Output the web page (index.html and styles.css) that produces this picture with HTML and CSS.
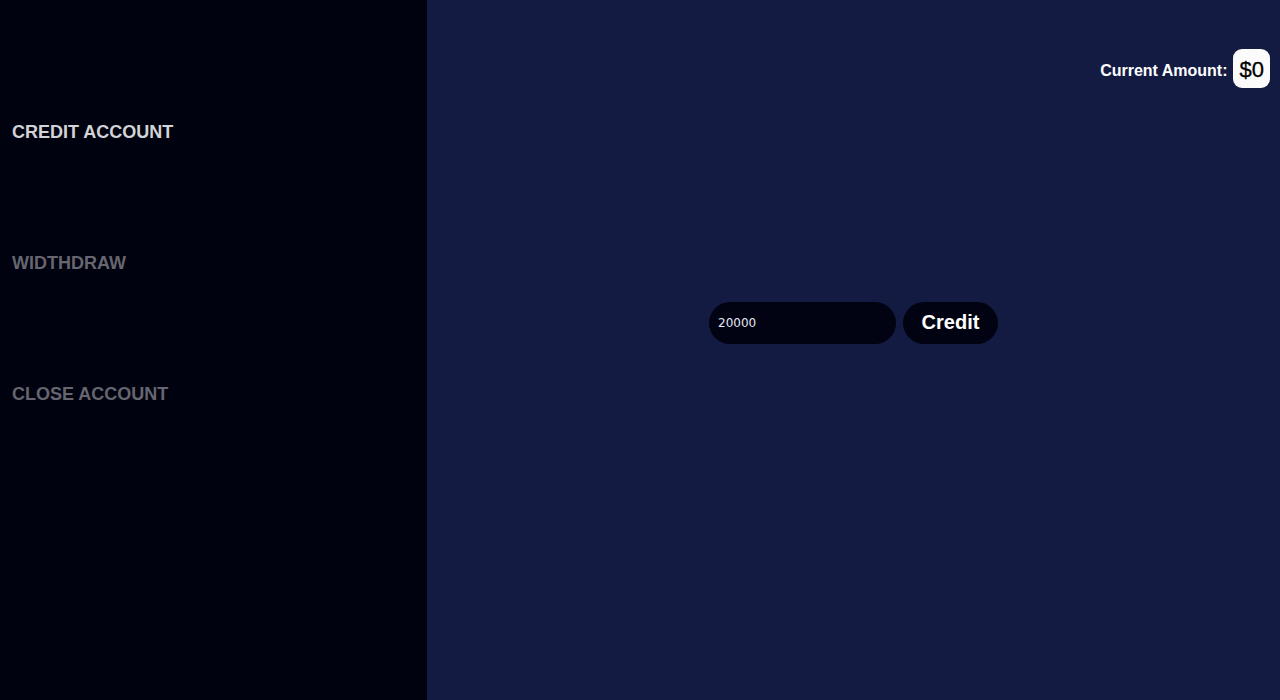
FILE: index.html
```html
<!DOCTYPE html>
<html>
<head>
<meta charset="utf-8">
<link rel="stylesheet" href="styles.css">
</head>
<body>
<div class="app">
  <aside class="sidebar">
    <nav class="nav">
      <a class="nav-item active">CREDIT ACCOUNT</a>
      <a class="nav-item">WIDTHDRAW</a>
      <a class="nav-item">CLOSE ACCOUNT</a>
    </nav>
  </aside>
  <main class="main">
    <header class="header">
      <span class="amount-label">Current Amount:</span>
      <span class="amount-box">$0</span>
    </header>
    <section class="form-area">
      <form class="form">
        <input class="amount-input" type="text" value="20000">
        <button class="credit-btn" type="button">Credit</button>
      </form>
    </section>
  </main>
</div>
</body>
</html>
```

FILE: styles.css
```css
html, body {
  margin: 0;
  padding: 0;
  height: 100%;
}
body {
  font-family: "Liberation Sans", Arial, sans-serif;
}
.app {
  display: flex;
  height: 700px;
}
.sidebar {
  width: 427px;
  flex-shrink: 0;
  background: #01020f;
}
.nav {
  display: flex;
  flex-direction: column;
  padding: 122px 0 0 12px;
  gap: 111px;
}
.nav-item {
  display: block;
  height: 20px;
  line-height: 20px;
  font-size: 18px;
  font-weight: bold;
  color: #65666f;
}
.nav-item.active {
  color: #d2d3d6;
}
.main {
  flex: 1;
  background: #141b42;
  display: flex;
  flex-direction: column;
}
.header {
  display: flex;
  justify-content: flex-end;
  align-items: center;
  gap: 5px;
  padding: 49px 10px 0 0;
}
.amount-label {
  color: #ffffff;
  font-weight: bold;
  font-size: 16px;
  padding-top: 5px;
}
.amount-box {
  background: #fbfbfc;
  color: #000;
  border-radius: 9px;
  height: 39px;
  line-height: 41px;
  padding: 0 6px 0 7px;
  font-size: 22px;
  -webkit-text-stroke: 0.3px #000;
}
.form-area {
  display: flex;
  justify-content: center;
  margin-top: 214px;
}
.form {
  display: flex;
  gap: 7px;
  margin: 0;
}
.amount-input {
  width: 187px;
  height: 42px;
  box-sizing: border-box;
  border: none;
  outline: none;
  border-radius: 21px;
  background: #020312;
  color: #e3e8f5;
  padding: 0 9px;
  font-family: "DejaVu Sans", sans-serif;
  font-size: 12px;
}
.credit-btn {
  width: 95px;
  height: 42px;
  border: none;
  border-radius: 21px;
  background: #020312;
  color: #ffffff;
  font-family: "Liberation Sans", Arial, sans-serif;
  font-weight: bold;
  font-size: 20px;
  padding: 0 0 2px 0;
}
```
